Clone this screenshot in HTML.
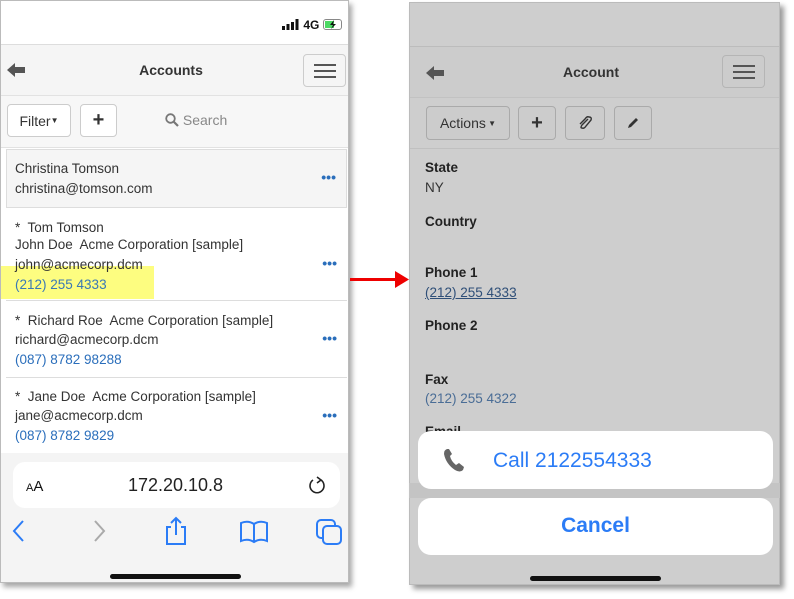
<!DOCTYPE html>
<html><head><meta charset="utf-8"><style>
*{box-sizing:border-box;margin:0;padding:0}
body{width:794px;height:599px;background:#fff;position:relative;overflow:hidden;font-family:"Liberation Sans",Arial,sans-serif;color:#333}
.abs{position:absolute}
.ph{position:absolute;overflow:hidden}
.btn{position:absolute;border:1px solid #ccc;border-radius:4px;background:#fff;display:flex;align-items:center;justify-content:center;font-size:14px}
.row{position:absolute;left:5px;width:341px;border-bottom:1px solid #ddd;font-size:13.5px;line-height:19.5px;padding-left:8px}
.dots{position:absolute;right:10px;color:#2a6ebb;font-size:14px;font-weight:bold}
.t{position:absolute;left:14px;font-size:13.5px;white-space:nowrap}
.lbl{position:absolute;left:425px;font-weight:bold;font-size:13.5px;color:#222}
.val{position:absolute;left:425px;font-size:13.5px}
</style></head><body>

<!-- LEFT PHONE -->
<div class="ph" style="left:0;top:0;width:349px;height:583px;background:#fff;border:1px solid #bbb;box-shadow:3px 4px 5px rgba(0,0,0,.35)">
 <div class="abs" style="left:281px;top:17px;font-size:12px;font-weight:bold;color:#111">
  <svg width="18" height="11" style="vertical-align:-1px"><rect x="0" y="7" width="3" height="4" fill="#111"/><rect x="4.5" y="5" width="3" height="6" fill="#111"/><rect x="9" y="3" width="3" height="8" fill="#111"/><rect x="13.5" y="0" width="3" height="11" fill="#111"/></svg> 4G
  <svg width="22" height="11" style="vertical-align:-1px"><rect x=".5" y=".5" width="18" height="10" rx="2.5" fill="none" stroke="#888"/><rect x="2" y="2" width="9" height="7" fill="#4cd964"/><path d="M11 1 L7 6 H10 L8 10 L13 5 H10 Z" fill="#111"/></svg>
 </div>
 <div class="abs" style="left:0;top:43px;width:349px;height:52px;background:#f5f5f5;border-top:1px solid #ddd;border-bottom:1px solid #e2e2e2"></div>
 <svg class="abs" style="left:6px;top:62px" width="18" height="14"><path d="M0 7 L8 0 V4 H18 V10 H8 V14 Z" fill="#555"/></svg>
 <div class="abs" style="left:0;width:340px;top:61px;text-align:center;font-weight:bold;font-size:14px;color:#333">Accounts</div>
 <div class="btn" style="left:302px;top:53px;width:43px;height:33px;background:#f5f5f5"><svg width="22" height="16"><path d="M0 2H22M0 8H22M0 14H22" stroke="#555" stroke-width="2"/></svg></div>
 <div class="abs" style="left:0;top:95px;width:349px;height:52px;background:#f7f7f7;border-bottom:1px solid #e2e2e2"></div>
 <div class="btn" style="left:6px;top:103px;width:64px;height:33px">Filter<span style="font-size:8px">▼</span></div>
 <div class="btn" style="left:79px;top:103px;width:37px;height:33px;font-weight:bold;font-size:20px">+</div>
 <div class="abs" style="left:164px;top:111px;font-size:14px;color:#888"><svg width="14" height="14" style="vertical-align:-2px"><circle cx="5.5" cy="5.5" r="4.3" fill="none" stroke="#777" stroke-width="1.8"/><path d="M8.5 8.5L13 13" stroke="#777" stroke-width="2.2"/></svg> Search</div>
 <div class="row" style="top:148px;height:59px;background:#f5f5f5;border:1px solid #ddd"><span class="dots" style="top:18px">•••</span></div>
 <div class="t" style="top:160px">Christina Tomson</div>
 <div class="t" style="top:180px">christina@tomson.com</div>
 <div class="row" style="top:207px;height:93px"><span class="dots" style="top:46px">•••</span></div>
 <div class="abs" style="left:0;top:265px;width:153px;height:33px;background:#fdfd80"></div>
 <div class="t" style="top:219px">*&nbsp; Tom Tomson</div>
 <div class="t" style="top:236px">John Doe&nbsp; Acme Corporation [sample]</div>
 <div class="t" style="top:256px">john@acmecorp.dcm</div>
 <div class="t" style="top:276px;color:#3a78b5">(212) 255 4333</div>
 <div class="row" style="top:300px;height:77px"><span class="dots" style="top:28px">•••</span></div>
 <div class="t" style="top:312px">*&nbsp; Richard Roe&nbsp; Acme Corporation [sample]</div>
 <div class="t" style="top:331px">richard@acmecorp.dcm</div>
 <div class="t" style="top:351px;color:#2a6ebb">(087) 8782 98288</div>
 <div class="row" style="top:377px;height:76px"><span class="dots" style="top:28px">•••</span></div>
 <div class="t" style="top:388px">*&nbsp; Jane Doe&nbsp; Acme Corporation [sample]</div>
 <div class="t" style="top:407px">jane@acmecorp.dcm</div>
 <div class="t" style="top:427px;color:#2a6ebb">(087) 8782 9829</div>
 <div class="abs" style="left:0;top:452px;width:349px;height:131px;background:#f4f4f4"></div>
 <div class="abs" style="left:12px;top:461px;width:327px;height:46px;background:#fff;border-radius:12px"></div>
 <div class="abs" style="left:25px;top:477px;font-size:15px;color:#111"><span style="font-size:11px">A</span>A</div>
 <div class="abs" style="left:0;width:349px;top:474px;text-align:center;font-size:18px;color:#222">172.20.10.8</div>
 <svg class="abs" style="left:306px;top:474px" width="20" height="22"><path d="M14 5 A7 7 0 1 1 6 5" fill="none" stroke="#222" stroke-width="1.6"/><path d="M10 2 L14 5 L10 8" fill="none" stroke="#222" stroke-width="1.6"/></svg>
 <svg class="abs" style="left:10px;top:517px" width="16" height="26"><path d="M12 3 L3 13 L12 23" fill="none" stroke="#2b7cf6" stroke-width="2"/></svg>
 <svg class="abs" style="left:90px;top:517px" width="16" height="26"><path d="M4 3 L13 13 L4 23" fill="none" stroke="#aaa" stroke-width="2"/></svg>
 <svg class="abs" style="left:162px;top:515px" width="26" height="30"><path d="M8 11 H4 V28 H22 V11 H18" fill="none" stroke="#2b7cf6" stroke-width="2"/><path d="M13 2 V19 M8 7 L13 2 L18 7" fill="none" stroke="#2b7cf6" stroke-width="2"/></svg>
 <svg class="abs" style="left:238px;top:519px" width="30" height="24"><path d="M2 3 Q9 0 15 4 Q21 0 28 3 V21 Q21 18 15 22 Q9 18 2 21 Z M15 4 V22" fill="none" stroke="#2b7cf6" stroke-width="2"/></svg>
 <svg class="abs" style="left:314px;top:517px" width="30" height="28"><rect x="2" y="2" width="18" height="18" rx="4" fill="none" stroke="#2b7cf6" stroke-width="2"/><rect x="8" y="8" width="18" height="18" rx="4" fill="#f4f4f4" stroke="#2b7cf6" stroke-width="2"/></svg>
 <div class="abs" style="left:109px;top:573px;width:131px;height:5px;border-radius:3px;background:#111"></div>
</div>

<!-- ARROW -->
<div class="abs" style="left:350px;top:278px;width:50px;height:3px;background:#e00"></div>
<svg class="abs" style="left:395px;top:271px" width="14" height="17"><path d="M0 0 L14 8.5 L0 17 Z" fill="#e00"/></svg>

<!-- RIGHT PHONE -->
<div class="ph" style="left:409px;top:2px;width:371px;height:583px;background:#cecece;border:1px solid #bbb;box-shadow:4px 4px 5px rgba(0,0,0,.4)">
 <div class="abs" style="left:0;top:43px;width:371px;height:52px;border-top:1px solid #bcbcbc;border-bottom:1px solid #c2c2c2;background:#cccccc"></div>
 <svg class="abs" style="left:16px;top:63px" width="18" height="14"><path d="M0 7 L8 0 V4 H18 V10 H8 V14 Z" fill="#555"/></svg>
 <div class="abs" style="left:0;width:362px;top:61px;text-align:center;font-weight:bold;font-size:14px;color:#333">Account</div>
 <div class="btn" style="left:312px;top:52px;width:43px;height:33px;background:#cccccc;border-color:#b5b5b5"><svg width="22" height="16"><path d="M0 2H22M0 8H22M0 14H22" stroke="#555" stroke-width="2"/></svg></div>
 <div class="abs" style="left:0;top:95px;width:371px;height:51px;border-bottom:1px solid #c0c0c0"></div>
 <div class="btn" style="left:16px;top:103px;width:84px;height:34px;background:#cccccc;border-color:#aaa">Actions <span style="font-size:8px">&nbsp;▼</span></div>
 <div class="btn" style="left:108px;top:103px;width:38px;height:34px;background:#cccccc;border-color:#aaa;font-weight:bold;font-size:20px">+</div>
 <div class="btn" style="left:155px;top:103px;width:40px;height:34px;background:#cccccc;border-color:#aaa"><svg width="16" height="16"><path d="M11 4 L5 10 Q3 13 5 13 Q7 14 9 11 L14 5 Q15 2 12 2 Q10 1 8 4 L3 9" fill="none" stroke="#333" stroke-width="1.4"/></svg></div>
 <div class="btn" style="left:204px;top:103px;width:38px;height:34px;background:#cccccc;border-color:#aaa"><svg width="14" height="14"><path d="M2 12 L3 9 L10 2 L12 4 L5 11 Z" fill="#333"/></svg></div>
</div>
<div class="lbl" style="top:160px">State</div><div class="val" style="top:180px">NY</div>
<div class="lbl" style="top:214px">Country</div>
<div class="lbl" style="top:265px">Phone 1</div><div class="val" style="top:285px;color:#2f4f78;text-decoration:underline">(212) 255 4333</div>
<div class="lbl" style="top:318px">Phone 2</div>
<div class="lbl" style="top:372px">Fax</div><div class="val" style="top:391px;color:#4a6d96">(212) 255 4322</div>
<div class="lbl" style="top:424px">Email</div>
<div class="abs" style="left:409px;top:483px;width:371px;height:15px;background:#c4c4c4"></div>
<div class="abs" style="left:418px;top:431px;width:355px;height:58px;background:#fff;border-radius:13px"></div>
<svg class="abs" style="left:443px;top:448px" width="24" height="25"><path d="M4 1 Q1 2 1 6 Q3 16 12 22 Q17 25 20 22 L21 19 L16 15 L13 17 Q8 13 7 8 L9 6 L6 1 Z" fill="#666"/></svg>
<div class="abs" style="left:493px;top:449px;font-size:21px;color:#2b7cf6">Call 2122554333</div>
<div class="abs" style="left:418px;top:498px;width:355px;height:57px;background:#fff;border-radius:13px"></div>
<div class="abs" style="left:418px;width:355px;top:514px;text-align:center;font-size:21px;color:#2b7cf6;font-weight:bold">Cancel</div>
<div class="abs" style="left:530px;top:576px;width:131px;height:5px;border-radius:3px;background:#111"></div>
</body></html>
